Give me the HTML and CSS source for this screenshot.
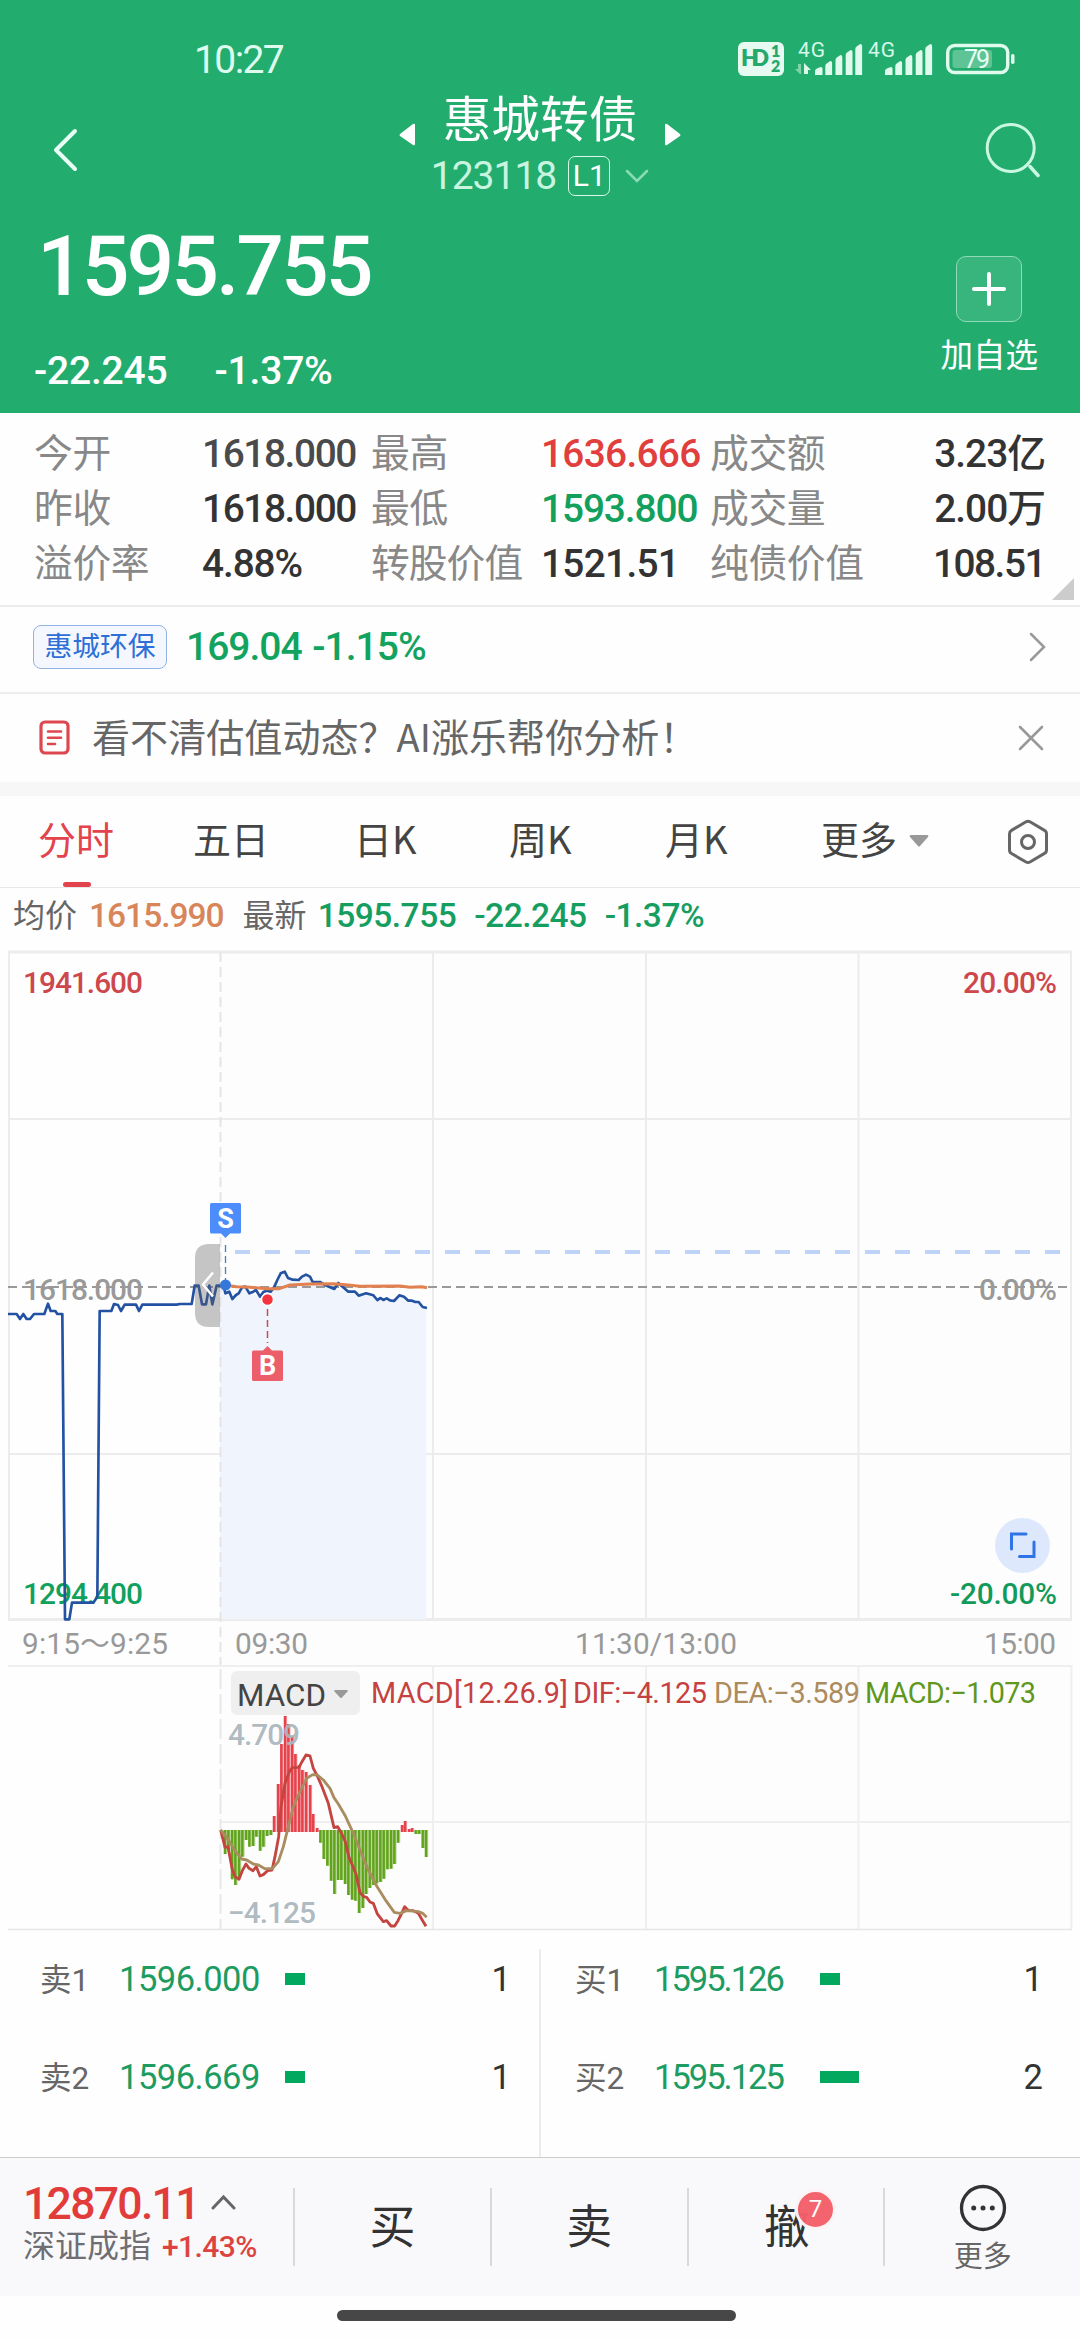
FILE: index.html
```html
<!DOCTYPE html>
<html lang="zh-CN">
<head>
<meta charset="utf-8">
<title>惠城转债 123118</title>
<link rel="stylesheet" href="styles.css">
</head>
<body>
<header class="header">
  <div class="status">
    <span class="clock">10:27</span>
    <svg class="status-icons" width="280" height="40" viewBox="736 39 280 40">
      <rect x="738" y="42" width="46" height="34" rx="6" fill="#e6faf1"/>
      <text x="741" y="66" class="hd" textLength="28">HD</text>
      <text x="771" y="57" class="hd-sub">1</text>
      <text x="771" y="72" class="hd-sub">2</text>
      <text x="798" y="57" class="net" textLength="27">4G</text>
      <text x="868" y="57" class="net" textLength="27">4G</text>
      <path d="M795 69h3v-5h3v10h-1z" fill="#7fd3ab"/>
      <path d="M804 74V63l7 7h-3v4z" fill="#d9f9ea"/>
      <g id="bars" fill="#e0fbee">
        <path d="M815 75v-4q0-2 3-3l3-1q1.500 0 1.500 1.500V75zM825.300 75V66q0-2 2-3l3-2q1.800 0 1.800 2V75zM835.500 75V60q0-2 2-3l3-2q1.800 0 1.800 2V75zM845.700 75V55q0-2 2-3l3-2q1.800 0 1.800 2V75zM855.300 75V49q0-2 2-3l3-2q1.800 0 1.800 2V75z"/>
      </g>
      <use href="#bars" x="70"/>
      <rect x="947.700" y="45.500" width="60" height="27" rx="7" fill="none" stroke="#dffbee" stroke-width="3.400"/>
      <rect x="952.500" y="50" width="39.500" height="18" rx="3" fill="#5ec496"/>
      <rect x="1011" y="54" width="3.500" height="10" rx="1.700" fill="#dffbee"/>
      <text x="964" y="68" class="battery" textLength="26">79</text>
    </svg>
  </div>
  <nav class="nav">
    <svg class="back" width="28" height="46" viewBox="0 0 28 46"><path d="M24 4L5 23l19 19" fill="none" stroke="#e8fff5" stroke-width="4" stroke-linecap="round" stroke-linejoin="round"/></svg>
    <div class="title-block">
      <div class="title-row">
        <svg class="tri" width="16" height="23" viewBox="0 0 16 23"><path d="M16 2v19q0 2-2 1L1 13q-1-1 0-2L14 1q2-1 2 1z" fill="#fff"/></svg>
        <h1>惠城转债</h1>
        <svg class="tri" width="16" height="23" viewBox="0 0 16 23"><path d="M0 2v19q0 2 2 1l13-9q1-1 0-2L2 1Q0 0 0 2z" fill="#fff"/></svg>
      </div>
      <div class="code-row">
        <span class="code">123118</span><span class="level">L1</span>
        <svg width="24" height="14" viewBox="0 0 24 14"><path d="M2 2l10 10L22 2" fill="none" stroke="#8cdbb6" stroke-width="2.500" stroke-linecap="round"/></svg>
      </div>
    </div>
    <svg class="search" width="56" height="56" viewBox="0 0 56 56"><circle cx="26.700" cy="25" r="23.500" fill="none" stroke="#c9f7e1" stroke-width="3"/><path d="M46 43.500l8 9" stroke="#c9f7e1" stroke-width="3.500" stroke-linecap="round"/></svg>
  </nav>
  <div class="quote">
    <div>
      <div class="price">1595.755</div>
      <div class="change"><span>-22.245</span><span>-1.37%</span></div>
    </div>
    <div class="add">
      <div class="add-box"><svg width="34" height="34" viewBox="0 0 34 34"><path d="M17 2v30M2 17h30" stroke="#fff" stroke-width="4" stroke-linecap="round"/></svg></div>
      <span>加自选</span>
    </div>
  </div>
</header>

<section class="stats">
  <span>今开</span><b class="soft w0">1618.000</b><span>最高</span><b class="red w1">1636.666</b><span>成交额</span><b class="end">3.23亿</b>
  <span>昨收</span><b class="w0">1618.000</b><span>最低</span><b class="green w2">1593.800</b><span>成交量</span><b class="end">2.00万</b>
  <span>溢价率</span><b class="w2">4.88%</b><span class="tight">转股价值</span><b class="w1">1521.51</b><span>纯债价值</span><b class="end num">108.51</b>
  <i class="corner"></i>
</section>

<section class="stock">
  <span class="tag">惠城环保</span><span class="stock-quote">169.04 -1.15%</span>
  <svg width="18" height="30" viewBox="0 0 18 30"><path d="M2 2l13 13L2 28" fill="none" stroke="#999" stroke-width="2.500" stroke-linecap="round"/></svg>
</section>

<section class="notice">
  <svg width="32" height="36" viewBox="0 0 32 36" fill="none" stroke="#dd4850"><rect x="2" y="2" width="27" height="31" rx="4" stroke-width="3.200"/><path d="M9 11.500h13M9 17.800h13M9 24h7" stroke-width="2.600" stroke-linecap="round"/></svg>
  <span>看不清估值动态？AI涨乐帮你分析！</span>
  <svg width="26" height="26" viewBox="0 0 26 26"><path d="M2 2l22 22M24 2L2 24" stroke="#999" stroke-width="2.600" stroke-linecap="round"/></svg>
</section>

<nav class="tabs">
  <span class="active">分时</span><span>五日</span><span>日K</span><span>周K</span><span>月K</span>
  <span class="more">更多<svg width="20" height="14" viewBox="0 0 20 14"><path d="M2 1h16q2 0 1 2l-8 9q-1 1-2 0L1 3Q0 1 2 1z" fill="#999"/></svg></span>
  <svg class="gear" width="42" height="46" viewBox="0 0 42 46" fill="none" stroke="#666" stroke-width="3"><path d="M19 2.800q2-1 4 0l14.500 8.600q2 1 2 3.500v16q0 2.500-2 3.500L23 43q-2 1-4 0L4.500 34.500q-2-1-2-3.500V15q0-2.500 2-3.600z"/><circle cx="21" cy="23" r="6.500"/></svg>
</nav>

<div class="legend">
  <span>均价</span><b class="orange">1615.990</b><span class="latest">最新</span><b>1595.755</b><b class="diff">-22.245</b><b class="pct">-1.37%</b>
</div>

<svg class="chart" width="1080" height="721" viewBox="0 944 1080 721">
  <rect x="220" y="952" width="851" height="713" fill="#fdfdfd"/>
  <g fill="none" stroke="#ececec" stroke-width="2">
    <path d="M8 1119H1071M8 1454H1071M433 952V1620M646 952V1620M858.500 952V1620M9 951V1620M1071 951V1620"/>
    <path d="M8 952H1072M8 1619.500H1072" stroke-width="3"/>
  </g>
  <g transform="translate(0 1180) scale(.33333)">
    <path d="M660 1318V318L672 322 676 340 688 335 697 357 726 322 748 340 780 350 812 335 854 275 878 299 896 300 918 284 938 306 975 315 1003 327 1045 335 1098 340 1132 360 1182 363 1198 346 1246 366 1279 384V1318z" fill="#eff4fd"/>
  </g>
  <path d="M220.500 952V1665" stroke="#e5e5e5" stroke-width="2" stroke-dasharray="10 5"/>
  <path d="M8 1287H1071" stroke="#999" stroke-width="1.800" stroke-dasharray="9 5"/>
  <path d="M235 1252H1062" stroke="#bfd3f7" stroke-width="4" stroke-dasharray="15 15"/>
  <g class="axis">
    <text x="23" y="993" fill="#cd474d" textLength="120">1941.600</text>
    <text x="963" y="993" fill="#cd474d" textLength="94">20.00%</text>
    <text x="23" y="1300" fill="#999" textLength="120">1618.000</text>
    <text x="979" y="1300" fill="#999" textLength="78">0.00%</text>
    <text x="23" y="1604" fill="#0fa15d" textLength="120">1294.400</text>
    <text x="950" y="1604" fill="#129a5b" textLength="107">-20.00%</text>
  </g>
  <g transform="translate(0 1180) scale(.33333)" fill="none" stroke-linejoin="round">
    <path stroke="#2452a3" stroke-width="8" d="M24 402L50 402 60 417 70 402 80 417 90 417 102 402 133 402 144 371 152 393 166 393 172 402 187 402 195 1318 208 1318 216 1268 280 1268 292 1250 299 393 334 393 342 372 354 375 363 393 374 374 408 374 417 393 427 374 530 374 540 372 575 372 584 317 596 317 606 373 618 373 628 317 637 373 650 317 662 317 672 322 676 340 688 335 697 357 708 345 716 340 726 322 736 320 748 340 760 335 768 330 780 350 790 336 800 332 812 335 822 322 832 300 842 280 854 275 864 294 878 299 896 300 906 290 918 284 930 290 938 306 960 306 975 315 1003 327 1015 309 1025 318 1045 335 1065 335 1076 347 1098 340 1120 346 1132 360 1142 354 1150 360 1160 355 1170 361 1182 363 1198 346 1212 350 1225 362 1236 362 1246 366 1256 366 1268 381 1281 384"/>
    <path stroke="#e2814f" stroke-width="9" d="M662 316L680 316 710 320 740 321 800 326 838 326 870 315 930 312 1000 311 1045 315 1080 319 1200 318 1230 322 1265 320 1281 323"/>
  </g>
  <path d="M220 1244h-11q-14 0-14 14v55q0 14 14 14h11z" fill="#606060" fill-opacity=".36"/>
  <path d="M213 1272.500l-10 12 10 12" fill="none" stroke="#fff" stroke-width="2.500"/>
  <path d="M225.500 1245V1280" stroke="#4680b8" stroke-width="1.300" stroke-dasharray="7 4"/>
  <circle cx="225.500" cy="1285" r="5.500" fill="#3678d9"/>
  <path d="M211.500 1203h28q1.500 0 1.500 1.500v27.500q0 1.500-1.500 1.500H230l-4.500 4.500-4.500-4.500h-9.500q-1.500 0-1.500-1.500v-27.500q0-1.500 1.500-1.500z" fill="#4c8dfb"/>
  <text x="225.500" y="1227.500" class="marker">S</text>
  <path d="M267.500 1309V1343" stroke="#cf4854" stroke-width="1.500" stroke-dasharray="7 4"/>
  <circle cx="267.500" cy="1299.500" r="6" fill="#f5333f" stroke="#fff" stroke-width="1.500"/>
  <path d="M253.500 1350.500h9.500l4.500-4.500 4.500 4.500h9.500q1.500 0 1.500 1.500v27.500q0 1.500-1.500 1.500h-28q-1.500 0-1.500-1.500v-27.500q0-1.500 1.500-1.500z" fill="#ec5e69"/>
  <text x="267.500" y="1375" class="marker">B</text>
  <circle cx="1022.500" cy="1545.500" r="27.500" fill="#dee8fd"/>
  <path d="M1011.500 1549v-15H1026M1019.500 1556.500h14.500v-14.500" fill="none" stroke="#2e74e6" stroke-width="3" stroke-linecap="round"/>
  <g class="axis time">
    <text x="22" y="1654" textLength="146">9:15～9:25</text>
    <text x="235" y="1654" textLength="73">09:30</text>
    <text x="575" y="1654" textLength="162">11:30/13:00</text>
    <text x="984" y="1654" textLength="72">15:00</text>
  </g>
</svg>

<svg class="macd" width="1080" height="268" viewBox="0 1665 1080 268">
  <rect x="220" y="1665" width="851" height="264" fill="#fdfdfd"/>
  <g fill="none" stroke="#efefef" stroke-width="2">
    <path d="M8 1666H1072M220 1822H1071M433 1665V1929M646 1665V1929M858.500 1665V1929M1071.500 1665V1929"/>
    <path d="M8 1929.500H1072" stroke="#e6e6e6" stroke-width="1.300"/>
    <path d="M220.500 1669V1929" stroke="#e8e8e8" stroke-dasharray="20 5"/>
  </g>
  <rect x="231" y="1671" width="129" height="44" rx="6" fill="#efefef"/>
  <text x="237" y="1706" class="chip" textLength="89" lengthAdjust="spacingAndGlyphs">MACD</text>
  <path d="M335 1690h12q1.500 0 .5 1.500l-5.500 6q-1 1-2 0l-5.500-6q-1-1.500.5-1.500z" fill="#999"/>
  <g class="macd-legend">
    <text x="371" y="1703" fill="#c6413f" textLength="197">MACD[12.26.9]</text>
    <text x="573" y="1703" fill="#c6413f" textLength="134">DIF:−4.125</text>
    <text x="714" y="1703" fill="#ac8b5c" textLength="146">DEA:−3.589</text>
    <text x="865" y="1703" fill="#5f981c" textLength="171">MACD:−1.073</text>
  </g>
  <g transform="translate(200 1650) scale(.33333)" fill="none">
    <g stroke="#62a51c">
      <path id="down" d="M64 540V548M75 540V612M85 540V600M96 540V688M106 540V705M117 540V682M127 540V620M138 540V570M148 540V590M159 540V588M169 540V560M180 540V602M190 540V590M201 540V558M212 540V555M361 540V578M371 540V627M382 540V647M393 540V692M403 540V732M414 540V690M424 540V690M435 540V702M445 540V735M456 540V749M466 540V752M477 540V789M488 540V774M498 540V732M509 540V714M520 540V705M530 540V700M541 540V696M551 540V686M562 540V658M573 540V656M583 540V642M594 540V578M647 540V552M657 540V552M668 540V594M678 540V621" stroke-width="7.500"/>
      <use href="#down" opacity=".45" x="3"/>
    </g>
    <g stroke="#e8434c">
      <path id="up" d="M222 546V498M234 546V402M244 546V282M255 546V198M265 546V222M276 546V258M286 546V312M297 546V345M307 546V360M318 546V366M330 546V405M339 546V492M351 546V534M606 546V525M615 546V513M627 546V537M636 546V534" stroke-width="7.500"/>
      <use href="#up" opacity=".5" x="2.500"/>
    </g>
    <path stroke="#c44540" stroke-width="8.500" stroke-linejoin="round" d="M62 540L75 592 84 590 96 655 105 680 117 688 127 662 138 642 147 655 159 662 169 650 180 678 190 674 203 662 216 660 225 620 236 560 243 470 255 400 268 365 276 353 297 352 306 335 318 315 330 318 340 355 352 378 366 410 385 460 402 533 413 530 422 545 436 575 447 622 468 672 480 728 492 740 500 742 510 756 520 760 532 792 550 815 560 812 573 828 584 828 594 812 604 792 614 770 626 782 640 782 655 790 668 812 678 829"/>
    <path stroke="#a98c60" stroke-width="8.500" stroke-linejoin="round" d="M62 540L80 562 100 595 125 627 140 630 160 642 175 645 195 656 217 656 235 635 250 590 265 530 280 470 300 425 320 385 338 374 352 375 370 390 390 415 402 443 415 462 436 498 460 550 480 600 505 660 530 708 555 748 583 787 600 790 620 782 655 785 668 790 680 802"/>
  </g>
  <g class="axis" fill="#aab6be" fill-opacity=".95">
    <text x="228" y="1745" textLength="72">4.709</text>
    <text x="228" y="1923" textLength="88">−4.125</text>
  </g>
</svg>

<section class="book">
  <div class="side">
    <div class="row"><span>卖1</span><b>1596.000</b><i class="bar"></i><em>1</em></div>
    <div class="row"><span>卖2</span><b>1596.669</b><i class="bar"></i><em>1</em></div>
  </div>
  <div class="side buy">
    <div class="row"><span>买1</span><b>1595.126</b><i class="bar"></i><em>1</em></div>
    <div class="row"><span>买2</span><b>1595.125</b><i class="bar double"></i><em>2</em></div>
  </div>
</section>

<footer class="footer">
  <div class="index">
    <div class="index-value">12870.11<svg width="25" height="16" viewBox="0 0 25 16"><path d="M2 14L12.500 3 23 14" fill="none" stroke="#666" stroke-width="3" stroke-linecap="round"/></svg></div>
    <div class="index-name">深证成指<b>+1.43%</b></div>
  </div>
  <div class="action">买</div>
  <div class="action">卖</div>
  <div class="action"><span class="cancel">撤<i class="badge">7</i></span></div>
  <div class="action last">
    <svg width="48" height="48" viewBox="0 0 48 48"><circle cx="24" cy="24" r="21.500" fill="none" stroke="#333" stroke-width="3.300"/><circle cx="14.700" cy="24" r="2.500" fill="#333"/><circle cx="24" cy="24" r="2.500" fill="#333"/><circle cx="33.300" cy="24" r="2.500" fill="#333"/></svg>
    <span>更多</span>
  </div>
</footer>
<div class="home"></div>
</body>
</html>
```
FILE: styles.css
```css
* { box-sizing: border-box; }
body {
  margin: 0;
  width: 1080px;
  height: 2340px;
  overflow: hidden;
  background: #fefefe;
  font-family: Roboto, "Noto Sans CJK SC", sans-serif;
  color: #333;
}
svg { display: block; flex: none; }
b { font-weight: 500; }
i, em { font-style: normal; }
h1 { margin: 0; font-weight: 400; }

.header { height: 413px; background: #22ad6f; color: #fff; }
.status { height: 84px; padding: 34px 64px 0 194px; display: flex; justify-content: space-between; align-items: center; }
.clock { font-size: 39px; letter-spacing: -1.600px; color: #dffbee; line-height: 50px; padding-top: 1px; }
.hd { font: 800 23px Lato, sans-serif; fill: #25a86e; }
.hd-sub { font: 800 16px Lato, sans-serif; fill: #25a86e; }
.net { font: 400 21px Roboto, sans-serif; fill: #d5f9e8; }
.battery { font: 400 25px Roboto, sans-serif; fill: #e6fff4; }

.nav { height: 122px; padding: 8px 40px 0 51px; display: flex; justify-content: space-between; align-items: flex-start; }
.back { margin-top: 35px; }
.search { margin-top: 31px; }
.title-block { margin-left: 17px; display: flex; flex-direction: column; align-items: center; }
.title-row { height: 54px; display: flex; align-items: center; gap: 28px; }
.title-row h1 { font-size: 48.700px; line-height: 54px; padding-top: 4px; }
.tri { align-self: flex-end; }
.code-row { height: 60px; display: flex; align-items: center; }
.code { font-size: 39px; letter-spacing: -1px; color: #c8f4e0; margin-right: 12px; }
.level { width: 42px; height: 40px; line-height: 37px; border: 1.500px solid #dcf8ea; border-radius: 7px; text-align: center; font-size: 30px; margin-right: 15px; }

.quote { height: 207px; padding: 0 42px 0 35px; display: flex; justify-content: space-between; }
.price { font-size: 84px; font-weight: 500; height: 120px; line-height: 122px; letter-spacing: -3px; padding-left: 2px; }
.change { display: flex; gap: 47px; font-size: 39px; font-weight: 500; line-height: 91px; margin-left: -1px; letter-spacing: -.200px; }
.add { display: flex; flex-direction: column; align-items: center; padding-top: 50px; font-size: 32.500px; }
.add-box { width: 66px; height: 66px; border: 1.500px solid #92d9b9; border-radius: 10px; background: #37b57d; display: flex; align-items: center; justify-content: center; }
.add span { margin-top: 9px; line-height: 50px; }

.stats {
  position: relative;
  height: 194px;
  padding: 13px 35px 0 34px;
  border-bottom: 2px solid #ededed;
  display: grid;
  grid-template-columns: 168px 169px 170px 169px 170px 1fr;
  grid-auto-rows: 55px;
  line-height: 56px;
  font-size: 38.800px;
  white-space: nowrap;
}
.stats span { color: #888; letter-spacing: -.400px; }
.stats .tight { letter-spacing: -1px; }
.soft { color: #4a4a4a; }
.stats .w0 { letter-spacing: -1.400px; }
.stats .w1 { letter-spacing: -.700px; }
.stats .w2 { letter-spacing: -1.100px; }
.stats .end { text-align: right; letter-spacing: -1px; font-family: Roboto, "Noto Sans CJK SC", sans-serif; }
.stats .num { letter-spacing: -1.500px; }
.red { color: #e03f3d; }
.green { color: #12a05d; }
.corner { position: absolute; right: 6px; bottom: 5px; width: 22px; height: 22px; background: #ccc; clip-path: polygon(100% 0, 100% 100%, 0 100%); }

.stock { height: 87px; padding: 0 33px 6px; border-bottom: 2px solid #ededed; display: flex; align-items: center; }
.stock svg, .notice svg:last-child { margin-left: auto; }
.tag { width: 134px; height: 44px; line-height: 41px; border: 1.500px solid #93b3e4; border-radius: 8px; background: #f4f8fe; color: #2d6fd6; font-size: 27.800px; text-align: center; }
.stock-quote { margin-left: 19px; font-size: 39px; font-weight: 500; letter-spacing: -1px; word-spacing: 2px; color: #12a35e; }

.notice { height: 88px; padding: 0 36px 0 39px; display: flex; align-items: center; color: #666; font-size: 38.100px; }
.notice span { margin-left: 21px; margin-top: -5px; font-family: "Noto Sans CJK SC", sans-serif; line-height: 80px; }

.tabs { height: 106px; padding: 12px 31px 0 38px; border-top: 14px solid #f7f7f7; border-bottom: 1.500px solid #e8e8e8; position: relative; display: flex; font-size: 38px; color: #444; line-height: 60px; font-family: "Noto Sans CJK SC", sans-serif; }
.tabs span { flex: none; width: 155px; }
.tabs span:nth-child(2) { width: 161px; }
.tabs span:nth-child(4), .tabs span:nth-child(5) { width: 156px; }
.tabs .active { color: #e2434c; position: relative; }
.tabs .active::after { content: ""; position: absolute; left: 25px; top: 74px; width: 28px; height: 5px; border-radius: 3px; background: #e2434c; }
.tabs .more { display: flex; align-items: center; gap: 12px; width: auto; height: 60px; }
.more svg { margin-top: 6px; }
.gear { margin: 11px 0 0 auto; }

.legend { height: 56px; padding-left: 13px; display: flex; align-items: center; font-size: 32px; color: #666; line-height: 50px; padding-bottom: 1px; }
.legend b { margin-left: 11px; font-size: 33.500px; letter-spacing: -.500px; color: #159e5f; }
.legend .orange { margin-left: 12px; color: #d9855a; letter-spacing: -1px; }
.latest { margin-left: 19px; }
.legend .diff, .legend .pct { margin-left: 18px; }

.axis { font: 500 29.800px Roboto, "Noto Sans CJK SC", sans-serif; }
.time { fill: #999; font-weight: 400; }
.marker { font: 700 27px Roboto, sans-serif; fill: #fff; text-anchor: middle; }
.chip { font: 400 32px Roboto, sans-serif; fill: #444; }
.macd-legend { font: 400 28.800px Roboto, sans-serif; }

.book { height: 224px; padding-top: 16px; display: flex; }
.side { width: 539px; padding: 0 28px 0 40px; }
.buy { width: 541px; border-left: 2px solid #ececec; padding: 0 37px 0 34px; }
.row { height: 98px; margin-top: -21px; margin-bottom: 21px; display: flex; align-items: center; font-size: 31px; color: #666; padding-top: 3px; }
.row span { width: 79px; font-size: 31.500px; margin-top: -4px; }
.row b { width: 166px; font-size: 34.500px; font-weight: 400; letter-spacing: -.500px; color: #1c9c61; }
.buy .row b { letter-spacing: -2px; }
.bar { width: 20px; height: 12px; background: #02a85e; }
.double { width: 39px; }
.row em { margin-left: auto; color: #333; font-size: 34.500px; }

.footer { height: 139px; border-top: 1.500px solid #ccc; background: #f9f9fb; display: flex; padding-top: 30px; }
.index { width: 294px; height: 78px; padding-left: 23px; }
.index-value { display: flex; align-items: center; gap: 12px; height: 31px; font-size: 44.500px; font-weight: 500; letter-spacing: -1.700px; color: #e23c3a; }
.index-value svg { margin-top: -4px; }
.index-name { margin-top: 10px; line-height: 34px; font-size: 32px; color: #6e6e73; }
.index-name b { margin-left: 11px; font-size: 30px; letter-spacing: -.600px; color: #dd4340; }
.action { width: 197.300px; height: 78px; border-left: 2px solid #d9d9dc; text-align: center; font-size: 46px; line-height: 78px; color: #333; }
.cancel { position: relative; left: 1px; }
.badge { position: absolute; left: 31px; top: -11px; width: 41px; height: 41px; border: 3px solid #fdf3f5; border-radius: 50%; background: #f4606a; opacity: .97; color: #fff; font-size: 24px; line-height: 35px; }
.last { display: flex; flex-direction: column; align-items: center; font-size: 29px; color: #666; line-height: 40px; }
.last svg { margin-top: -4px; }
.last span { margin-top: 5px; }
.home { width: 399px; height: 11px; margin: 14px auto 0 337px; border-radius: 6px; background: #474747; }
```
